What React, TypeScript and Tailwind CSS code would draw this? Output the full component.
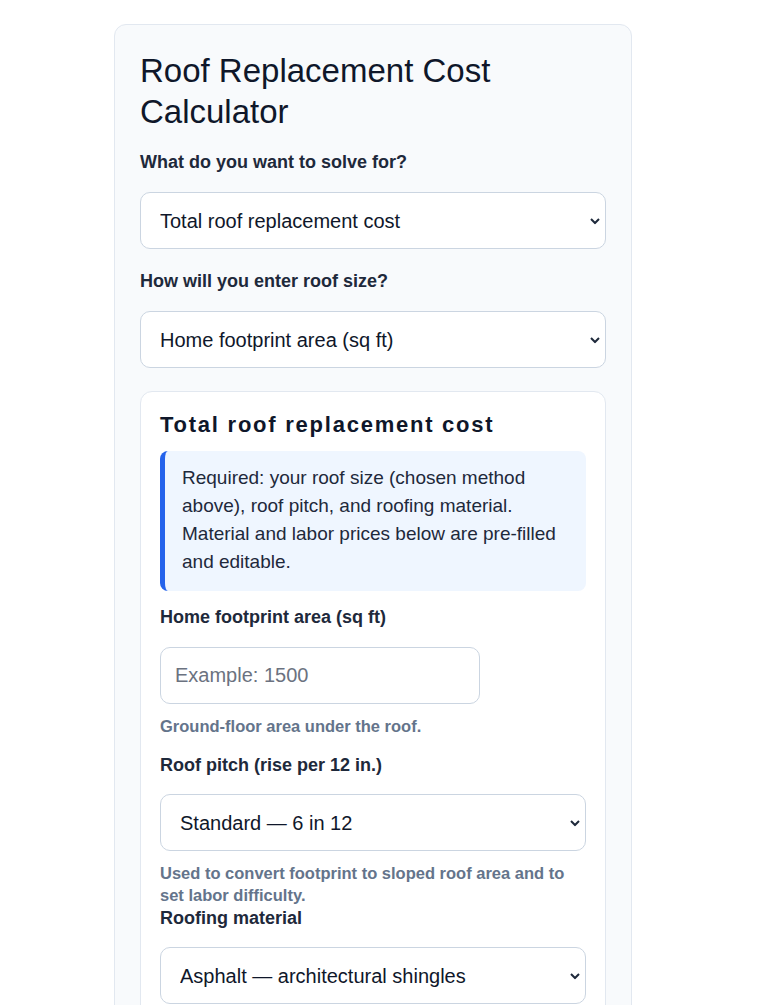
function Select({ value, className = "" }: { value: string; className?: string }) {
  return (
    <div className={"relative " + className}>
      <select className="h-[57px] w-full appearance-none rounded-[10px] border border-[#cbd5e1] bg-white pr-10 pl-[19px] text-[20px] text-[#0f172a]">
        <option>{value}</option>
      </select>
      <svg
        className="pointer-events-none absolute top-1/2 right-[6px] -translate-y-1/2"
        width="10"
        height="7"
        viewBox="0 0 10 7"
        fill="none"
      >
        <path d="M1 1.5 L5 5.5 L9 1.5" stroke="#1e293b" strokeWidth="2" />
      </svg>
    </div>
  );
}

export default function App() {
  const font = { fontFamily: '"Liberation Sans", Arial, sans-serif' };
  return (
    <div className="min-h-screen bg-white pt-6" style={font}>
      <div className="ml-[114px] w-[518px] rounded-xl border border-[#e2e8f0] bg-[#f8fafc] px-[25px] pt-[25px] pb-10">
        <h1 className="mb-[18px] text-[33px] leading-[41px] font-normal text-[#0f172a]">
          Roof Replacement Cost Calculator
        </h1>

        <label className="block text-[18px] leading-6 font-bold text-[#1e293b]">What do you want to solve for?</label>
        <Select value="Total roof replacement cost" className="mt-[18px]" />

        <label className="mt-5 block text-[18px] leading-6 font-bold text-[#1e293b]">How will you enter roof size?</label>
        <Select value="Home footprint area (sq ft)" className="mt-[18px]" />

        <div className="mt-[23px] rounded-xl border border-[#e2e8f0] bg-white px-[19px] pt-5 pb-10">
          <h2 className="text-[22px] leading-[26px] font-bold tracking-[0.08em] text-[#0f172a]">Total roof replacement cost</h2>

          <div className="mt-[13px] rounded-lg border-l-[5px] border-[#2563eb] bg-[#eff6ff] pt-[13px] pr-4 pb-[15px] pl-[17px] text-[19px] leading-7 text-[#1e293b]">
            Required: your roof size (chosen method above), roof pitch, and roofing material. Material and labor prices below are pre-filled and editable.
          </div>

          <label className="mt-[14px] block text-[18px] leading-6 font-bold text-[#1e293b]">Home footprint area (sq ft)</label>
          <input
            placeholder="Example: 1500"
            className="mt-[18px] block h-[57px] w-[320px] rounded-[10px] border border-[#cbd5e1] bg-white px-[14px] text-[20px] text-[#0f172a] placeholder:text-[#6b7280]"
          />
          <p className="mt-[11px] text-[16.5px] leading-[22px] font-bold text-[#64748b]">Ground-floor area under the roof.</p>

          <label className="mt-4 block text-[18px] leading-6 font-bold text-[#1e293b]">Roof pitch (rise per 12 in.)</label>
          <Select value="Standard — 6 in 12" className="mt-[17px]" />
          <p className="mt-[11px] text-[16.5px] leading-[22px] font-bold text-[#64748b]">
            Used to convert footprint to sloped roof area and to set labor difficulty.
          </p>

          <label className="block text-[18px] leading-6 font-bold text-[#1e293b]">Roofing material</label>
          <Select value="Asphalt — architectural shingles" className="mt-[17px]" />
        </div>
      </div>
    </div>
  );
}
